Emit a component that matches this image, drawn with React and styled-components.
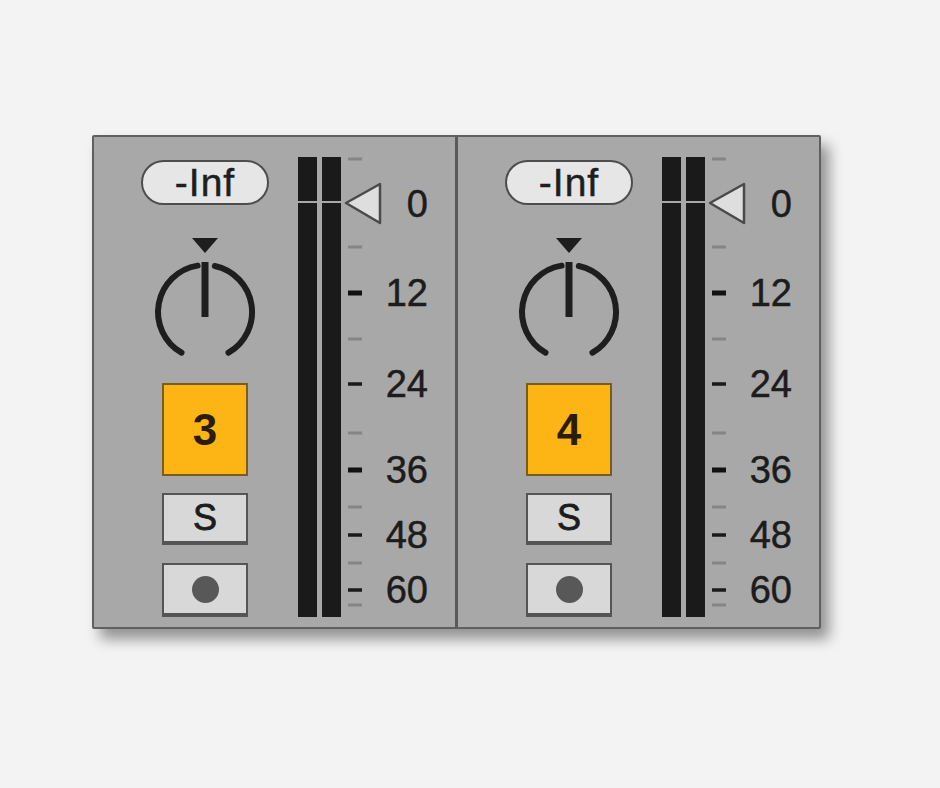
import {createGlobalStyle, styled} from 'styled-components';

const GlobalStyle = createGlobalStyle`
  body {
    margin: 0;
    background: #f3f3f3;
    font-family: "Liberation Sans", Arial, sans-serif;
  }
`

const Page = styled.div`
  width: 940px;
  height: 788px;
  box-sizing: border-box;
  padding: 135px 0 0 92px;
  display: flex;
  align-items: flex-start;
`

const Mixer = styled.div`
  display: flex;
  background: #a8a8a8;
  border: 2px solid #606060;
  border-radius: 2px;
  box-shadow: 8px 10px 14px rgba(0, 0, 0, 0.4);
`

const Strip = styled.div`
  width: 361px;
  height: 490px;
  display: flex;
  align-items: flex-start;
  border-right: ${({$divider}) => $divider ? '3px solid #5a5a5a' : 'none'};
`

const Controls = styled.div`
  width: 204px;
  box-sizing: border-box;
  padding: 23px 0 0 18px;
  display: flex;
  flex-direction: column;
  align-items: center;
`

const VolumeBox = styled.div`
  width: 128px;
  height: 45px;
  box-sizing: border-box;
  border: 2.5px solid #4d4d4d;
  border-radius: 23px;
  background: #e6e6e6;
  display: flex;
  align-items: center;
  justify-content: center;
  font-size: 39px;
  letter-spacing: 1px;
  color: #1e1e1e;
  -webkit-text-stroke: 0.5px #1e1e1e;
  line-height: 1;
`

const KnobSvg = styled.svg`
  display: block;
  margin-top: 31px;
`

const TrackButton = styled.div`
  width: 86px;
  height: 93px;
  box-sizing: border-box;
  margin-top: 22px;
  background: #fdb515;
  border: 2px solid #7a5c1e;
  display: flex;
  align-items: center;
  justify-content: center;
  font-size: 44px;
  font-weight: 700;
  color: #2a1d0e;
`

const SmallButton = styled.div`
  width: 86px;
  height: ${({$h}) => $h}px;
  box-sizing: border-box;
  margin-top: ${({$gap}) => $gap}px;
  background: #d8d8d8;
  border: 2px solid #555;
  border-bottom-width: 4px;
  display: flex;
  align-items: center;
  justify-content: center;
  font-size: 36px;
  color: #1c1c1c;
  -webkit-text-stroke: 0.8px #1c1c1c;
`

const RecDot = styled.span`
  width: 27px;
  height: 27px;
  border-radius: 50%;
  background: #585858;
`

const Meter = styled.div`
  margin-top: 20px;
  display: flex;
  gap: 5px;
`

const MeterBar = styled.div`
  width: 19px;
  height: 460px;
  display: flex;
  flex-direction: column;
  gap: 2px;
  &::before {
    content: '';
    height: 44px;
    background: #1a1a1a;
  }
  &::after {
    content: '';
    flex: 1;
    background: #1a1a1a;
  }
`

const Scale = styled.div`
  position: relative;
  flex: 1;
  height: 490px;
`

const ScaleSvg = styled.svg`
  display: block;
`

const DbLabel = styled.span`
  position: absolute;
  right: 27px;
  transform: translateY(-50%);
  font-size: 38px;
  line-height: 1;
  color: #1c1c1c;
  -webkit-text-stroke: 0.5px #1c1c1c;
`

const ticks = [
  {y: 22, kind: 'minor'},
  {y: 110, kind: 'minor'},
  {y: 156, kind: 'bold'},
  {y: 202, kind: 'minor'},
  {y: 247, kind: 'major'},
  {y: 296, kind: 'minor'},
  {y: 333, kind: 'bold'},
  {y: 370, kind: 'minor'},
  {y: 398, kind: 'major'},
  {y: 426, kind: 'minor'},
  {y: 453, kind: 'major'},
  {y: 468, kind: 'minor'},
]

const labels = [
  {y: 67, text: '0'},
  {y: 156, text: '12'},
  {y: 247, text: '24'},
  {y: 333, text: '36'},
  {y: 398, text: '48'},
  {y: 453, text: '60'},
]

const tickStyle = {
  minor: {h: 3, color: '#858585'},
  major: {h: 3.5, color: '#1a1a1a'},
  bold: {h: 5, color: '#111'},
}

function Knob() {
  return (
    <KnobSvg width="110" height="125" viewBox="0 0 110 125">
      <polygon points="42,2 68,2 55,17" fill="#1e1e1e" />
      <g fill="none" stroke="#1e1e1e" strokeWidth="6" strokeLinecap="round">
        <path d="M31.5 116.7 A47 47 0 0 1 47.6 29.6" />
        <path d="M64.8 30 A47 47 0 0 1 78.5 116.7" />
      </g>
      <line x1="55" y1="26" x2="55" y2="81" stroke="#1e1e1e" strokeWidth="7" />
    </KnobSvg>
  )
}

function DbScale() {
  return (
    <Scale>
      <ScaleSvg width="44" height="490" viewBox="0 0 44 490">
        {ticks.map((t, i) => {
          const s = tickStyle[t.kind];
          return <rect key={i} x="7" y={t.y - s.h / 2} width="14" height={s.h} fill={s.color} />
        })}
        <polygon points="5,66 39,47 39,86" fill="#dedede" stroke="#4a4a4a" strokeWidth="2.5" strokeLinejoin="round" />
      </ScaleSvg>
      {labels.map((l) => (
        <DbLabel key={l.text} style={{top: l.y}}>{l.text}</DbLabel>
      ))}
    </Scale>
  )
}

function ChannelStrip({number, divider}) {
  return (
    <Strip $divider={divider}>
      <Controls>
        <VolumeBox>-Inf</VolumeBox>
        <Knob />
        <TrackButton>{number}</TrackButton>
        <SmallButton $h={52} $gap={17}>S</SmallButton>
        <SmallButton $h={54} $gap={18}><RecDot /></SmallButton>
      </Controls>
      <Meter>
        <MeterBar />
        <MeterBar />
      </Meter>
      <DbScale />
    </Strip>
  )
}

export default function App() {
  return (
    <Page>
      <GlobalStyle />
      <Mixer>
        <ChannelStrip number="3" divider />
        <ChannelStrip number="4" />
      </Mixer>
    </Page>
  )
}
